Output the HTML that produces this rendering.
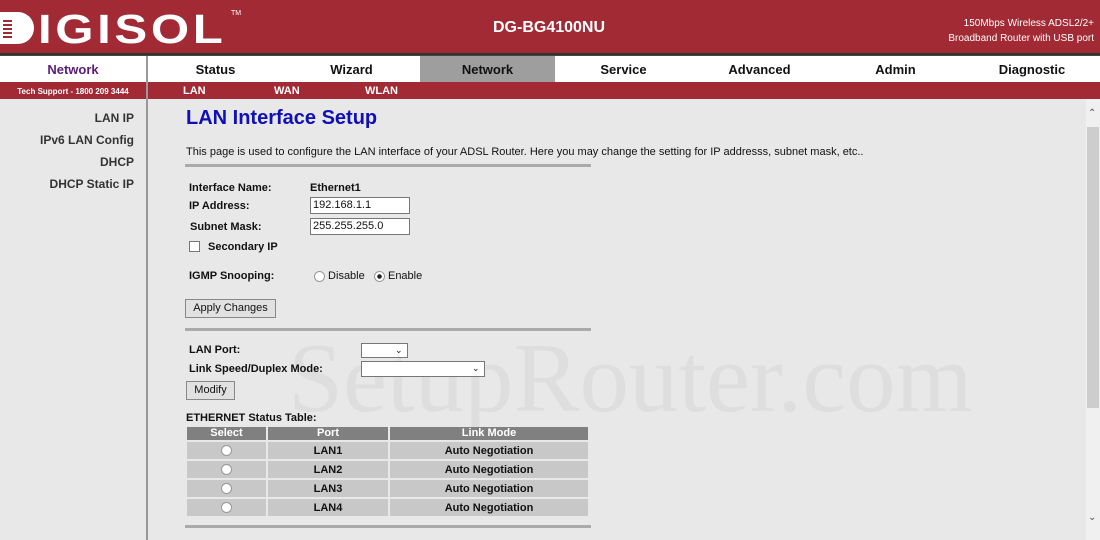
<!DOCTYPE html>
<html><head><style>
*{margin:0;padding:0;box-sizing:border-box}
body{width:1100px;height:540px;overflow:hidden;background:#e8e8e8;font-family:"Liberation Sans",Arial,sans-serif;position:relative;color:#111}
.a{position:absolute;white-space:nowrap}
.b{font-weight:bold}
.hdr{left:0;top:0;width:1100px;height:53px;background:#a12a35}
.nav{left:0;top:55px;width:1100px;height:27px;background:#fff;border-top:1px solid #444}
.sub{left:0;top:82px;width:1100px;height:17px;background:#a12a35}
.navt{top:62px;font-size:13px;font-weight:bold;text-align:center}
.sbt{top:85px;font-size:11px;font-weight:bold;color:#fff}
.side{font-size:12px;font-weight:bold;color:#333;right:966px}
.lbl{font-size:11px;font-weight:bold}
.inp{background:#fff;border:1px solid #777;font-size:11px;padding:1px 2px;height:17px}
.btn{background:#e1e1e1;border:1px solid #888;font-size:11px;text-align:center;line-height:17px;height:19px}
.hr{height:3px;background:#aaa;left:185px;width:406px}
table{border-collapse:separate;border-spacing:2px;font-size:11px;font-weight:bold}
th{background:#808080;color:#fff;font-weight:bold;height:13px;line-height:13px}
td{background:#c8c8c8;text-align:center;height:17px}
.rad{display:inline-block;width:11px;height:11px;border-radius:50%;background:#fff;border:1px solid #999;vertical-align:middle}
</style></head><body>
<div class="a hdr"></div>
<svg class="a" style="left:0;top:12px" width="34" height="32" viewBox="0 0 34 32">
<path d="M0 0H18A16 16 0 0 1 18 32H0Z" fill="#fff"/>
<g fill="#a12a35"><rect x="3" y="8" width="9" height="2"/><rect x="3" y="12" width="9" height="2"/><rect x="3" y="16" width="9" height="2"/><rect x="3" y="20" width="9" height="2"/><rect x="3" y="24" width="9" height="2"/></g></svg>
<div class="a" style="left:38px;top:7px;font-size:41px;font-weight:900;color:#fff;letter-spacing:3px;line-height:44px;transform:scaleX(1.2);transform-origin:0 0">IGISOL</div>
<div class="a" style="left:231px;top:10px;font-size:7px;color:#fff">TM</div>
<div class="a b" style="left:493px;top:19px;font-size:16px;color:#fff">DG-BG4100NU</div>
<div class="a" style="right:6px;top:16px;font-size:10px;color:#fff;text-align:right;line-height:15px">150Mbps Wireless ADSL2/2+<br>Broadband Router with USB port</div>
<div class="a" style="left:0;top:53px;width:1100px;height:3px;background:#333"></div>
<div class="a nav"></div>
<div class="a" style="left:420px;top:56px;width:135px;height:26px;background:#9e9e9e"></div>
<div class="a navt" style="left:0;width:146px;color:#5a1c7a">Network</div>
<div class="a navt" style="left:148px;width:135px">Status</div>
<div class="a navt" style="left:284px;width:135px">Wizard</div>
<div class="a navt" style="left:420px;width:135px">Network</div>
<div class="a navt" style="left:556px;width:135px">Service</div>
<div class="a navt" style="left:692px;width:135px">Advanced</div>
<div class="a navt" style="left:828px;width:135px">Admin</div>
<div class="a navt" style="left:964px;width:136px">Diagnostic</div>
<div class="a sub"></div>
<div class="a sbt" style="left:0;width:146px;text-align:center;font-size:8px;top:87px">Tech Support - 1800 209 3444</div>
<div class="a sbt" style="left:183px">LAN</div>
<div class="a sbt" style="left:274px">WAN</div>
<div class="a sbt" style="left:365px">WLAN</div>
<div class="a" style="left:146px;top:56px;width:2px;height:484px;background:#999"></div>
<div class="a side" style="top:111px">LAN IP</div>
<div class="a side" style="top:133px">IPv6 LAN Config</div>
<div class="a side" style="top:155px">DHCP</div>
<div class="a side" style="top:177px">DHCP Static IP</div>
<div class="a" style="left:288px;top:322px;font-size:99px;color:#dedede;font-family:'Liberation Serif',serif">SetupRouter.com</div>
<div class="a b" style="left:186px;top:107px;font-size:20px;color:#1010b8">LAN Interface Setup</div>
<div class="a" style="left:186px;top:146px;font-size:11px">This page is used to configure the LAN interface of your ADSL Router. Here you may change the setting for IP addresss, subnet mask, etc..</div>
<div class="a hr" style="top:164px"></div>
<div class="a lbl" style="left:189px;top:182px">Interface Name:</div>
<div class="a lbl" style="left:310px;top:182px">Ethernet1</div>
<div class="a lbl" style="left:189px;top:200px">IP Address:</div>
<div class="a inp" style="left:310px;top:197px;width:100px">192.168.1.1</div>
<div class="a lbl" style="left:190px;top:221px">Subnet Mask:</div>
<div class="a inp" style="left:310px;top:218px;width:100px">255.255.255.0</div>
<div class="a" style="left:189px;top:241px;width:11px;height:11px;background:#fff;border:1px solid #777"></div>
<div class="a lbl" style="left:208px;top:241px">Secondary IP</div>
<div class="a lbl" style="left:189px;top:270px">IGMP Snooping:</div>
<div class="a" style="left:314px;top:270px;font-size:11px"><span class="rad"></span> Disable &nbsp;&nbsp;<span class="rad" style="background:radial-gradient(circle,#222 2px,#fff 2.5px)"></span> Enable</div>
<div class="a btn" style="left:185px;top:299px;width:91px">Apply Changes</div>
<div class="a hr" style="top:328px"></div>
<div class="a lbl" style="left:189px;top:344px">LAN Port:</div>
<div class="a inp" style="left:361px;top:343px;width:47px;height:15px;font-size:9px;text-align:right">&#8964;&nbsp;</div>
<div class="a lbl" style="left:189px;top:363px">Link Speed/Duplex Mode:</div>
<div class="a inp" style="left:361px;top:361px;width:124px;height:16px;font-size:9px;text-align:right">&#8964;&nbsp;</div>
<div class="a btn" style="left:186px;top:381px;width:49px">Modify</div>
<div class="a lbl" style="left:186px;top:412px">ETHERNET Status Table:</div>
<div class="a" style="left:185px;top:425px">
<table style="width:405px"><tr><th style="width:79px">Select</th><th style="width:120px">Port</th><th>Link Mode</th></tr>
<tr><td><span class="rad"></span></td><td>LAN1</td><td>Auto Negotiation</td></tr>
<tr><td><span class="rad"></span></td><td>LAN2</td><td>Auto Negotiation</td></tr>
<tr><td><span class="rad"></span></td><td>LAN3</td><td>Auto Negotiation</td></tr>
<tr><td><span class="rad"></span></td><td>LAN4</td><td>Auto Negotiation</td></tr></table></div>
<div class="a hr" style="top:525px"></div>
<div class="a" style="left:1086px;top:99px;width:14px;height:441px;background:#f0f0f0"></div>
<div class="a" style="left:1087px;top:127px;width:12px;height:281px;background:#cdcdcd"></div>
<div class="a" style="left:1088px;top:108px;font-size:10px;color:#555">&#8963;</div>
<div class="a" style="left:1088px;top:512px;font-size:10px;color:#555">&#8964;</div>
</body></html>
